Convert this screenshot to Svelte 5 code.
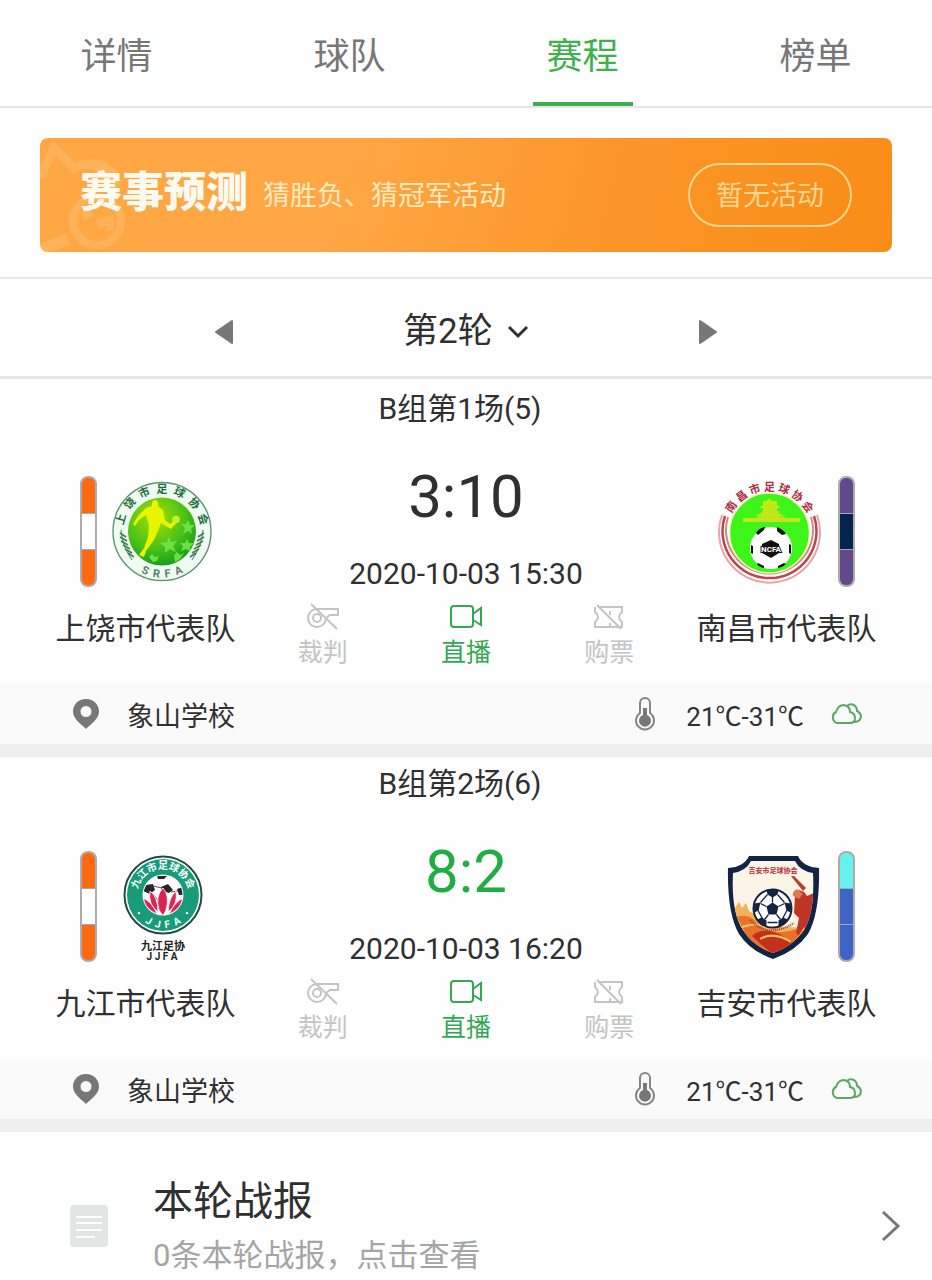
<script lang="ts">
  interface Team {
    name: string;
    crest: "srfa" | "ncfa" | "jjfa" | "jafa";
    kit: string[];
  }

  interface Match {
    id: number;
    title: string;
    score: string;
    live: boolean;
    time: string;
    home: Team;
    away: Team;
    venue: string;
    weather: string;
  }

  const tabs = ["详情", "球队", "赛程", "榜单"];
  const rounds = [1, 2, 3];
  const orangeKit = ["#fb6a10", "#ffffff", "#fb6a10"];

  const matches: Match[] = [
    {
      id: 5,
      title: "B组第1场(5)",
      score: "3:10",
      live: false,
      time: "2020-10-03 15:30",
      home: { name: "上饶市代表队", crest: "srfa", kit: orangeKit },
      away: { name: "南昌市代表队", crest: "ncfa", kit: ["#614a8c", "#05234f", "#614a8c"] },
      venue: "象山学校",
      weather: "21℃-31℃",
    },
    {
      id: 6,
      title: "B组第2场(6)",
      score: "8:2",
      live: true,
      time: "2020-10-03 16:20",
      home: { name: "九江市代表队", crest: "jjfa", kit: orangeKit },
      away: { name: "吉安市代表队", crest: "jafa", kit: ["#66f3ee", "#3f64c8", "#3f64c8"] },
      venue: "象山学校",
      weather: "21℃-31℃",
    },
  ];

  let activeTab = $state("赛程");
  let round = $state(2);
</script>

{#snippet ball(cx: number, cy: number, r: number)}
  <g transform="translate({cx} {cy}) scale({r / 20})">
    <circle r="19" fill="#fff" stroke="#14233f" stroke-width="2" />
    <path d="M0-6 6-2 4 6H-4L-6-2Z" fill="#14233f" />
    <path d="M0-6V-13M6-2 12-5M4 6 8 11M-4 6-8 11M-6-2-12-5M5-14 12-6M15 1 9 12M5 14H-5M-15 1-9 12M-5-14-12-6" stroke="#14233f" stroke-width="1.3" fill="none" />
    <path d="M-6-18Q0-20 6-18L5-14 0-11-5-14ZM12-6 18-5Q19 0 18 4L14 2ZM-12-6-18-5Q-19 0-18 4L-14 2ZM6 12 11 9 15 11Q11 17 6 18ZM-6 12-11 9-15 11Q-11 17-6 18Z" fill="#14233f" />
  </g>
{/snippet}

{#snippet crest(kind: string)}
  <svg class="crest" viewBox="0 0 100 111" aria-hidden="true">
    {#if kind === "srfa"}
      <defs>
        <radialGradient id="srfa-field" cx="40%" cy="30%" r="75%">
          <stop offset="0" stop-color="#a8e000" />
          <stop offset="0.6" stop-color="#48c118" />
          <stop offset="1" stop-color="#129a1c" />
        </radialGradient>
        <path id="srfa-top" d="M11 55.500A39 39 0 0 1 89 55.500" />
        <path id="srfa-base" d="M4 55.500A46 46 0 0 0 96 55.500" />
      </defs>
      <circle cx="50" cy="55.500" r="49" fill="#effbf0" stroke="#5f9474" stroke-width="1.400" />
      <circle cx="50" cy="55.500" r="34" fill="url(#srfa-field)" />
      <path d="M57 60 59 66 65 65 61 70 64 76 58 73 53 77 53 71 48 67 55 66ZM76 44 78 49 83 49 79 53 80 58 76 55 71 58 73 52 69 48 74 48ZM75 63 77 67 82 67 78 71 78 75 74 73 69 75 71 70 68 67 73 67ZM37 81 40 78 43 81 47 80 45 85 41 86ZM62 79 65 76 68 79 72 77 68 83 63 86Z" fill="#6fe043" />
      <path d="M40 30Q39 25 43 24 47 25 46 30L51 34 53 44 58 48 63 44 65 46 59 53 52 49 49 47 46 55 42 64 34 75 32 81 27 79 32 72 36 61 37 49 34 39 27 44 23 50 21 48 26 40 34 32Z" fill="#e9f500" />
      <circle cx="64" cy="43.500" r="3.800" fill="#c5f228" />
      <path d="M8 57 14 61M8 61 15 65M9 65 16 69M11 69 18 73M13 73 20 77M16 77 22 81M92 57 86 61M92 61 85 65M91 65 84 69M89 69 82 73M87 73 80 77M84 77 78 81" stroke="#3e8453" stroke-width="1.800" />
      <path d="M9 54Q10 70 20 84M91 54Q90 70 80 84" stroke="#3e8453" stroke-width="1" fill="none" />
      <text class="crest-text" font-size="11" fill="#216c3a"><textPath href="#srfa-top" startOffset="50%" text-anchor="middle">上&ensp;饶&ensp;市&ensp;足&ensp;球&ensp;协&ensp;会</textPath></text>
      <text class="crest-text" font-size="11" fill="#5b8068"><textPath href="#srfa-base" startOffset="50%" text-anchor="middle">S&ensp;R&ensp;F&ensp;A</textPath></text>
    {:else if kind === "ncfa"}
      <defs>
        <path id="ncfa-top" d="M8 57A42.500 42.500 0 0 1 93 57" />
      </defs>
      <path d="M3 39A50.500 50.500 0 1 0 98 39" fill="none" stroke="#e9a4a6" stroke-width="2" />
      <path d="M6 40A47 47 0 1 0 95 40" fill="none" stroke="#b9474c" stroke-width="2.500" />
      <path d="M9 41A43.500 43.500 0 1 0 92 41" fill="none" stroke="#d98586" stroke-width="2" />
      <circle cx="50.500" cy="57" r="40" fill="#3df51a" stroke="#f2f4b2" stroke-width="1.500" />
      <path d="M50 22 53 25H58V29L62 32H58V36L65 40H60V42H81V46H24V42H42V40H37L44 36V32H40L44 29V25H48Z" fill="#b5ef16" />
      <path d="M44 29H58M43 36H61M38 41H66M28 45H80" stroke="#d5d824" stroke-width="1.500" />
      <circle cx="52" cy="72" r="21" fill="#fff" />
      <path d="M52 64 60 68V77L52 82 43 77V68Z" fill="#111" />
      <path d="M37 57Q40 52 46 51L45 54 39 59ZM58 51Q65 54 67 58L63 59 58 55ZM70 68 72 69V78L70 77ZM32 69 34 70 34 78 32 77ZM39 87 45 90 45 92Q40 91 38 88ZM65 87 67 88Q64 91 59 92V90Z" fill="#111" />
      <text class="crest-text" x="52" y="76" font-size="8" text-anchor="middle" fill="#fff" stroke="#111" stroke-width="2" paint-order="stroke">NCFA</text>
      <text class="crest-text" font-size="11" fill="#ab2c43"><textPath href="#ncfa-top" startOffset="50%" text-anchor="middle">南 昌 市 足 球 协 会</textPath></text>
    {:else if kind === "jjfa"}
      <defs>
        <clipPath id="jjfa-inner"><circle cx="51" cy="44" r="19.500" /></clipPath>
        <path id="jjfa-top" d="M25 44A26 26 0 0 1 77 44" />
        <path id="jjfa-base" d="M18 44A33 33 0 0 0 84 44" />
      </defs>
      <circle cx="51" cy="44" r="38.500" fill="#fff" stroke="#244b49" stroke-width="2" />
      <circle cx="51" cy="44" r="36" fill="#179b79" />
      <circle cx="51" cy="44" r="20.500" fill="#fff" />
      <g clip-path="url(#jjfa-inner)">
        <path d="M34 34 41 33 43 39 38 43 31 40ZM49 36 56 33 61 39 57 42 50 40ZM45 25H55L52 28H46ZM65 38 71 36V44L67 44Z" fill="#26262b" />
        <path d="M41 35 50 37M40 42 46 49M59 41 66 40" stroke="#555" fill="none" />
        <path d="M51 37Q58 45 54 59L51 65 47 59Q43 45 51 37ZM38 40Q46 46 46 61 36 54 38 40ZM64 40Q57 46 56 61 66 54 64 40ZM30 47Q40 50 45 63 33 61 30 47ZM72 47Q63 50 57 63 69 61 72 47Z" fill="#dc2451" stroke="#fff" stroke-width=".8" />
      </g>
      <circle cx="27" cy="62" r="1.300" fill="#fff" />
      <circle cx="75" cy="62" r="1.300" fill="#fff" />
      <text class="crest-text" font-size="10" fill="#fff"><textPath href="#jjfa-top" startOffset="50%" text-anchor="middle">九江市足球协会</textPath></text>
      <text class="crest-text" font-size="10" fill="#fff"><textPath href="#jjfa-base" startOffset="50%" text-anchor="middle">J&ensp;J&ensp;F&ensp;A</textPath></text>
      <text class="crest-text" x="51" y="99" font-size="11" text-anchor="middle" fill="#222">九江足协</text>
      <text class="crest-text" x="50" y="109" font-size="10" text-anchor="middle" fill="#222">J J F A</text>
    {:else}
      <defs>
        <clipPath id="jafa-inner"><path d="M32 10H76Q81 20 94 22 96 61 85 79 74 95 54 102 34 95 24 79 12 61 14 22 27 20 32 10Z" /></clipPath>
      </defs>
      <path d="M30 5H79Q84 16 100 17 101 62 89 83 77 100 54 108 31 100 20 83 8 62 9 17 25 16 30 5Z" fill="#122445" />
      <g clip-path="url(#jafa-inner)">
        <path d="M10 5H100V108H10Z" fill="#fdf4e8" />
        <path d="M16 57 20 51 23 57 27 52 30 60 38 65 50 75 88 77V110H10V62Z" fill="#f4b258" />
        <path d="M18 66Q30 62 38 72T64 81L90 76V110H40Z" fill="#e87229" />
        <path d="M33 85Q44 75 62 84L81 96 55 105Z" fill="#c4301c" />
        <path d="M23 76Q39 70 49 78M41 88Q55 80 72 91" stroke="#f6c463" stroke-width="2" fill="none" />
        <path d="M76 45 80 39 85 41 88 45 97 41 94 73 84 89 77 82 80 67 75 62Z" fill="#bf3425" />
        <path d="M72 25 84 40 87 37 75 25Z" fill="#b63d30" />
        <path d="M74 45Q73 40 78 38L84 43 80 48Z" fill="#dd7850" />
        <path d="M85 76 75 92 90 85Z" fill="#efa64c" />
      </g>
      <path d="M31 69Q50 88 75 72" stroke="#a13b38" stroke-width="2" stroke-dasharray="1 1" fill="none" />
      {@render ball(53.5, 57.5, 20)}
      <text class="crest-text" x="54" y="22" font-size="7" text-anchor="middle" fill="#b02e35">吉安市足球协会</text>
    {/if}
  </svg>
{/snippet}

{#snippet kitBar(colors: string[])}
  <div class="kit">
    {#each colors as color}
      <span style="background: {color}"></span>
    {/each}
  </div>
{/snippet}

<main class="page">
  <nav class="tabs">
    {#each tabs as tab}
      <button class="tab" class:active={tab === activeTab} onclick={() => (activeTab = tab)}>{tab}</button>
    {/each}
  </nav>

  <section class="promo">
    <div class="banner">
      <svg class="banner-art" viewBox="0 0 100 114" aria-hidden="true">
        <g fill="none" stroke="#ffc27d" opacity=".4">
          <path d="M0 40 14 10 34 30Q56 20 74 36" stroke-width="9" />
          <circle cx="57" cy="83" r="24" stroke-width="8" />
          <path d="M0 112 28 101M56 25 78 48" stroke-width="12" />
          <path d="M42 79 52 74M57 86 70 82V93" stroke-width="9" />
        </g>
      </svg>
      <strong class="banner-title">赛事预测</strong>
      <span class="banner-text">猜胜负、猜冠军活动</span>
      <button class="banner-btn">暂无活动</button>
    </div>
  </section>

  <section class="round">
    <button class="arrow" aria-label="上一轮" onclick={() => (round = Math.max(1, round - 1))}>
      <svg width="20" height="26" viewBox="0 0 20 26"><path d="M18 2V24L2 13Z" /></svg>
    </button>
    <label class="round-picker">
      <select aria-label="轮次" bind:value={round}>
        {#each rounds as n}
          <option value={n}>第{n}轮</option>
        {/each}
      </select>
      <svg width="22" height="14" viewBox="0 0 22 14"><path d="M2 2 11 11 20 2" /></svg>
    </label>
    <button class="arrow" aria-label="下一轮" onclick={() => (round = Math.min(rounds.length, round + 1))}>
      <svg width="20" height="26" viewBox="0 0 20 26"><path d="M2 2V24L18 13Z" /></svg>
    </button>
  </section>

  {#each matches as match (match.id)}
    <article class="match">
      <h2 class="match-title">{match.title}</h2>
      <div class="match-body">
        <div class="team">
          <div class="badge">
            {@render kitBar(match.home.kit)}
            {@render crest(match.home.crest)}
          </div>
          <span class="team-name">{match.home.name}</span>
        </div>

        <div class="middle">
          <div class="score" class:live={match.live}>{match.score}</div>
          <time class="time">{match.time}</time>
          <div class="actions">
            <button class="action" disabled>
              <svg width="34" height="28" viewBox="0 0 34 28">
                <path d="M11 6H32V12H24L20 15A9 9 0 1 1 11 6ZM5 1 31 26" />
                <circle cx="11" cy="15" r="4" />
              </svg>
              裁判
            </button>
            <button class="action on">
              <svg width="34" height="28" viewBox="0 0 34 28">
                <rect x="2" y="3" width="22" height="21" rx="3" />
                <path d="M24 11 32 5V22L24 17" />
              </svg>
              直播
            </button>
            <button class="action" disabled>
              <svg width="34" height="28" viewBox="0 0 34 28">
                <path d="M7 4H30V9Q24 14 30 19V24H3V19Q9 14 3 9V4M5 2 29 26M18 8V12M18 20V24" />
              </svg>
              购票
            </button>
          </div>
        </div>

        <div class="team away">
          <div class="badge">
            {@render crest(match.away.crest)}
            {@render kitBar(match.away.kit)}
          </div>
          <span class="team-name">{match.away.name}</span>
        </div>
      </div>

      <footer class="info">
        <svg class="pin" width="28" height="32" viewBox="0 0 28 32">
          <path fill-rule="evenodd" d="M14 1C6 1 1 7 1 13.500 1 21 9 26 14 31 19 26 27 21 27 13.500 27 7 22 1 14 1ZM14 8A5.500 5.500 0 1 1 14 19 5.500 5.500 0 1 1 14 8Z" />
        </svg>
        <span class="venue">{match.venue}</span>
        <svg class="thermo" width="22" height="34" viewBox="0 0 22 34">
          <path d="M6 16V6A5 5 0 0 1 16 6V16A9 9 0 1 1 6 16Z" fill="none" stroke="#858585" stroke-width="2" />
          <path d="M9 11H13V18A6 6 0 1 1 9 18Z" fill="#777" />
        </svg>
        <span class="weather">{match.weather}</span>
        <svg class="cloud" width="32" height="22" viewBox="0 0 32 22">
          <path d="M7 20A6 6 0 0 1 6 9Q8 2 14 2 20 3 20 9 25 10 25 15 25 20 20 20ZM17 3Q20 0 24 2 27 4 27 8 31 10 31 14 30 19 24 19" />
        </svg>
      </footer>
    </article>
  {/each}

  <a class="report" href="#report">
    <svg width="38" height="42" viewBox="0 0 38 42">
      <rect width="38" height="42" rx="4" fill="#e3e5e5" />
      <path d="M6 12H32M6 18H32M6 25H32M6 32H25" stroke="#fff" stroke-width="2" />
    </svg>
    <div class="report-text">
      <span class="report-title">本轮战报</span>
      <span class="report-sub">0条本轮战报，点击查看</span>
    </div>
    <svg width="20" height="32" viewBox="0 0 20 32">
      <path d="M2 2 17 16 2 30" fill="none" stroke="#777" stroke-width="3" />
    </svg>
  </a>
</main>

<style>
  :global(body) {
    background: #fefefe;
  }

  .page {
    font-family: Roboto, "Noto Sans CJK SC", sans-serif;
    color: #303030;
  }

  button,
  select {
    font: inherit;
    color: inherit;
    background: none;
    border: 0;
    padding: 0;
    cursor: pointer;
  }

  .tabs {
    display: grid;
    grid-template-columns: repeat(4, 1fr);
    border-bottom: 2px solid #e6e6e6;
  }

  .tab {
    display: flex;
    flex-direction: column;
    align-items: center;
    justify-content: space-between;
    height: 106px;
    padding-top: 34px;
    font-size: 36px;
    line-height: 46px;
    color: #777;
  }

  .tab::after {
    content: "";
    width: 100px;
    height: 4px;
  }

  .tab.active {
    color: #3eb14d;
  }

  .tab.active::after {
    background: #3eae54;
  }

  .promo {
    padding: 30px 40px 25px;
    border-bottom: 2px solid #e6e6e6;
  }

  .banner {
    position: relative;
    display: flex;
    align-items: center;
    height: 114px;
    padding: 0 40px;
    border-radius: 8px;
    overflow: hidden;
    background: linear-gradient(105deg, #ffa743 0%, #ffa745 35%, #fc962a 65%, #f88d16 100%);
  }

  .banner-art {
    position: absolute;
    left: 0;
    top: 0;
    height: 100%;
  }

  .banner-title {
    position: relative;
    padding-bottom: 4px;
    font-size: 42px;
    line-height: 50px;
    font-weight: 900;
    color: #fffaf0;
  }

  .banner-text {
    margin-left: 15px;
    padding-bottom: 4px;
    font-size: 27px;
    color: #ffe9bd;
  }

  .banner-btn {
    margin-left: auto;
    height: 64px;
    padding: 0 26px 4px;
    border: 2px solid #ffd48c;
    border-radius: 32px;
    font-size: 27px;
    color: #ffd591;
  }

  .round {
    display: flex;
    align-items: center;
    justify-content: center;
    gap: 169px;
    height: 100px;
    padding-top: 8px;
    box-sizing: border-box;
    border-bottom: 3px solid #e6e6e6;
    margin-bottom: 3px;
  }

  .arrow {
    display: flex;
  }

  .arrow path {
    fill: #777;
    stroke: #777;
    stroke-width: 2;
    stroke-linejoin: round;
  }

  .round-picker {
    display: flex;
    align-items: center;
    gap: 14px;
  }

  .round-picker select {
    appearance: none;
    font-size: 35px;
    line-height: 46px;
  }

  .round-picker path {
    fill: none;
    stroke: #303030;
    stroke-width: 3;
  }

  .match {
    border-bottom: 13px solid #efefef;
  }

  .match-title {
    margin: 0;
    padding: 7px 12px 0 0;
    font-size: 30px;
    line-height: 40px;
    font-weight: 400;
    text-align: center;
  }

  .match-body {
    display: grid;
    grid-template-columns: 211px 1fr 211px;
    height: 255px;
    padding: 0 40px;
  }

  .team {
    display: flex;
    flex-direction: column;
    align-items: center;
    gap: 22px;
    padding-top: 47px;
  }

  .badge {
    display: flex;
    gap: 15px;
  }

  .away .badge {
    gap: 19px;
  }

  .crest {
    width: 100px;
    height: 111px;
    overflow: visible;
  }

  .crest-text {
    font-family: Roboto, "Noto Sans CJK SC", sans-serif;
    font-weight: 700;
  }

  .kit {
    display: flex;
    flex-direction: column;
    gap: 1px;
    width: 17px;
    height: 111px;
    box-sizing: border-box;
    border: 2px solid #b0aaa8;
    border-radius: 8px;
    overflow: hidden;
    background: #a5a5b5;
  }

  .kit span {
    flex: 1;
  }

  .team-name {
    font-size: 30px;
    line-height: 40px;
    white-space: nowrap;
  }

  .middle {
    display: flex;
    flex-direction: column;
    align-items: center;
  }

  .score {
    padding-top: 33px;
    font-size: 60px;
    line-height: 70px;
  }

  .score.live {
    color: #1fae42;
  }

  .time {
    padding-top: 22px;
    font-size: 30px;
    line-height: 40px;
  }

  .actions {
    align-self: stretch;
    display: grid;
    grid-template-columns: repeat(3, 1fr);
    padding-top: 9px;
  }

  .action {
    display: flex;
    flex-direction: column;
    align-items: center;
    gap: 6px;
    font-size: 25px;
    line-height: 32px;
    color: #c4c4c4;
  }

  .action svg {
    fill: none;
    stroke: currentColor;
    stroke-width: 2;
  }

  .action.on {
    color: #32a852;
  }

  .info {
    display: flex;
    align-items: center;
    height: 60px;
    padding: 0 70px 0 72px;
    background: #fafafa;
  }

  .pin {
    fill: #777;
  }

  .venue {
    margin-left: 27px;
    margin-right: auto;
    font-size: 27px;
  }

  .weather {
    margin: 0 26px 0 30px;
    font-size: 26px;
  }

  .cloud {
    fill: none;
    stroke: #5ca866;
    stroke-width: 2;
  }

  .report {
    display: flex;
    align-items: center;
    padding: 42px 31px 0 70px;
    color: inherit;
    text-decoration: none;
  }

  .report-text {
    flex: 1;
    display: flex;
    flex-direction: column;
    gap: 5px;
    margin-left: 45px;
  }

  .report-title {
    font-size: 40px;
    line-height: 56px;
  }

  .report-sub {
    font-size: 31px;
    line-height: 42px;
    color: #a5a5a5;
  }
</style>
